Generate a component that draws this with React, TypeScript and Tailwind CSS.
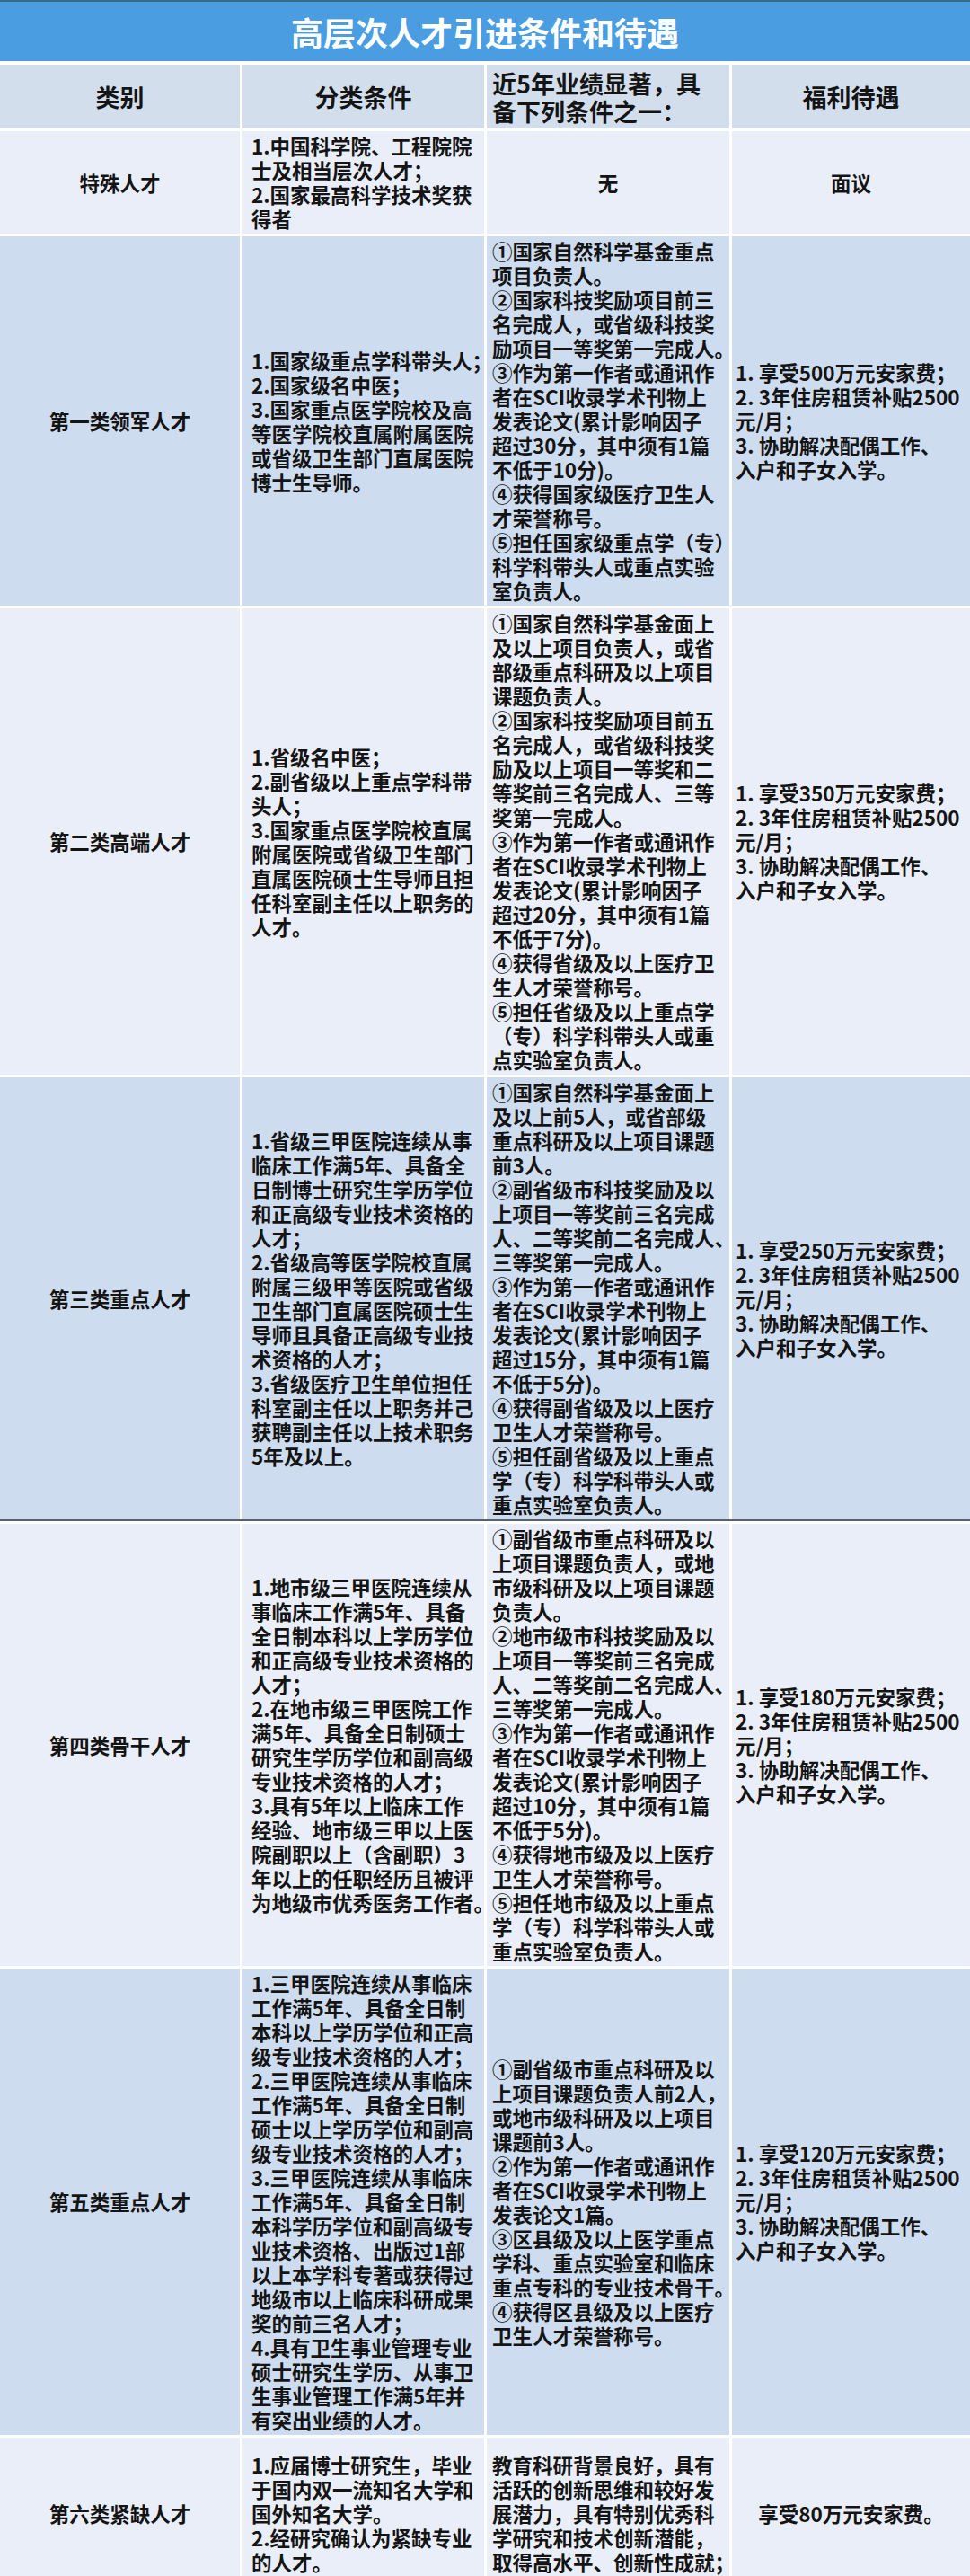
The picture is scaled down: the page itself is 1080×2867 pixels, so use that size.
import React from "react";

type Row = {
  name: string;
  c2: string[];
  c3: string[];
  c4: string[];
  dark: boolean;
  c3center?: boolean;
  c4center?: boolean;
  seam?: boolean;
  minH?: string;
};

const benefit = (amt: string) => [
  `1. 享受${amt}万元安家费；`,
  "2. 3年住房租赁补贴2500",
  "元/月；",
  "3. 协助解决配偶工作、",
  "入户和子女入学。",
];

const rows: Row[] = [
  {
    name: "特殊人才",
    c2: ["1.中国科学院、工程院院", "士及相当层次人才；", "2.国家最高科学技术奖获", "得者"],
    c3: ["无"],
    c4: ["面议"],
    dark: false,
    c3center: true,
    c4center: true,
  },
  {
    name: "第一类领军人才",
    c2: [
      "1.国家级重点学科带头人；",
      "2.国家级名中医；",
      "3.国家重点医学院校及高",
      "等医学院校直属附属医院",
      "或省级卫生部门直属医院",
      "博士生导师。",
    ],
    c3: [
      "①国家自然科学基金重点",
      "项目负责人。",
      "②国家科技奖励项目前三",
      "名完成人，或省级科技奖",
      "励项目一等奖第一完成人。",
      "③作为第一作者或通讯作",
      "者在SCI收录学术刊物上",
      "发表论文(累计影响因子",
      "超过30分，其中须有1篇",
      "不低于10分)。",
      "④获得国家级医疗卫生人",
      "才荣誉称号。",
      "⑤担任国家级重点学（专）",
      "科学科带头人或重点实验",
      "室负责人。",
    ],
    c4: benefit("500"),
    dark: true,
  },
  {
    name: "第二类高端人才",
    c2: [
      "1.省级名中医；",
      "2.副省级以上重点学科带",
      "头人；",
      "3.国家重点医学院校直属",
      "附属医院或省级卫生部门",
      "直属医院硕士生导师且担",
      "任科室副主任以上职务的",
      "人才。",
    ],
    c3: [
      "①国家自然科学基金面上",
      "及以上项目负责人，或省",
      "部级重点科研及以上项目",
      "课题负责人。",
      "②国家科技奖励项目前五",
      "名完成人，或省级科技奖",
      "励及以上项目一等奖和二",
      "等奖前三名完成人、三等",
      "奖第一完成人。",
      "③作为第一作者或通讯作",
      "者在SCI收录学术刊物上",
      "发表论文(累计影响因子",
      "超过20分，其中须有1篇",
      "不低于7分)。",
      "④获得省级及以上医疗卫",
      "生人才荣誉称号。",
      "⑤担任省级及以上重点学",
      "（专）科学科带头人或重",
      "点实验室负责人。",
    ],
    c4: benefit("350"),
    dark: false,
  },
  {
    name: "第三类重点人才",
    c2: [
      "1.省级三甲医院连续从事",
      "临床工作满5年、具备全",
      "日制博士研究生学历学位",
      "和正高级专业技术资格的",
      "人才；",
      "2.省级高等医学院校直属",
      "附属三级甲等医院或省级",
      "卫生部门直属医院硕士生",
      "导师且具备正高级专业技",
      "术资格的人才；",
      "3.省级医疗卫生单位担任",
      "科室副主任以上职务并己",
      "获聘副主任以上技术职务",
      "5年及以上。",
    ],
    c3: [
      "①国家自然科学基金面上",
      "及以上前5人，或省部级",
      "重点科研及以上项目课题",
      "前3人。",
      "②副省级市科技奖励及以",
      "上项目一等奖前三名完成",
      "人、二等奖前二名完成人、",
      "三等奖第一完成人。",
      "③作为第一作者或通讯作",
      "者在SCI收录学术刊物上",
      "发表论文(累计影响因子",
      "超过15分，其中须有1篇",
      "不低于5分)。",
      "④获得副省级及以上医疗",
      "卫生人才荣誉称号。",
      "⑤担任副省级及以上重点",
      "学（专）科学科带头人或",
      "重点实验室负责人。",
    ],
    c4: benefit("250"),
    dark: true,
    seam: true,
  },
  {
    name: "第四类骨干人才",
    c2: [
      "1.地市级三甲医院连续从",
      "事临床工作满5年、具备",
      "全日制本科以上学历学位",
      "和正高级专业技术资格的",
      "人才；",
      "2.在地市级三甲医院工作",
      "满5年、具备全日制硕士",
      "研究生学历学位和副高级",
      "专业技术资格的人才；",
      "3.具有5年以上临床工作",
      "经验、地市级三甲以上医",
      "院副职以上（含副职）3",
      "年以上的任职经历且被评",
      "为地级市优秀医务工作者。",
    ],
    c3: [
      "①副省级市重点科研及以",
      "上项目课题负责人，或地",
      "市级科研及以上项目课题",
      "负责人。",
      "②地市级市科技奖励及以",
      "上项目一等奖前三名完成",
      "人、二等奖前二名完成人、",
      "三等奖第一完成人。",
      "③作为第一作者或通讯作",
      "者在SCI收录学术刊物上",
      "发表论文(累计影响因子",
      "超过10分，其中须有1篇",
      "不低于5分)。",
      "④获得地市级及以上医疗",
      "卫生人才荣誉称号。",
      "⑤担任地市级及以上重点",
      "学（专）科学科带头人或",
      "重点实验室负责人。",
    ],
    c4: benefit("180"),
    dark: false,
  },
  {
    name: "第五类重点人才",
    c2: [
      "1.三甲医院连续从事临床",
      "工作满5年、具备全日制",
      "本科以上学历学位和正高",
      "级专业技术资格的人才；",
      "2.三甲医院连续从事临床",
      "工作满5年、具备全日制",
      "硕士以上学历学位和副高",
      "级专业技术资格的人才；",
      "3.三甲医院连续从事临床",
      "工作满5年、具备全日制",
      "本科学历学位和副高级专",
      "业技术资格、出版过1部",
      "以上本学科专著或获得过",
      "地级市以上临床科研成果",
      "奖的前三名人才；",
      "4.具有卫生事业管理专业",
      "硕士研究生学历、从事卫",
      "生事业管理工作满5年并",
      "有突出业绩的人才。",
    ],
    c3: [
      "①副省级市重点科研及以",
      "上项目课题负责人前2人，",
      "或地市级科研及以上项目",
      "课题前3人。",
      "②作为第一作者或通讯作",
      "者在SCI收录学术刊物上",
      "发表论文1篇。",
      "③区县级及以上医学重点",
      "学科、重点实验室和临床",
      "重点专科的专业技术骨干。",
      "④获得区县级及以上医疗",
      "卫生人才荣誉称号。",
    ],
    c4: benefit("120"),
    dark: true,
  },
  {
    name: "第六类紧缺人才",
    c2: [
      "1.应届博士研究生，毕业",
      "于国内双一流知名大学和",
      "国外知名大学。",
      "2.经研究确认为紧缺专业",
      "的人才。",
    ],
    c3: [
      "教育科研背景良好，具有",
      "活跃的创新思维和较好发",
      "展潜力，具有特别优秀科",
      "学研究和技术创新潜能，",
      "取得高水平、创新性成就；",
    ],
    c4: ["享受80万元安家费。"],
    dark: false,
    c4center: true,
    minH: "min-h-[168px]",
  },
];

function Lines({ lines }: { lines: string[] }) {
  return (
    <div>
      {lines.map((l, i) => (
        <div key={i} className="whitespace-nowrap">
          {l}
        </div>
      ))}
    </div>
  );
}

export default function App() {
  return (
    <div
      className="w-[1080px] h-[2867px] overflow-hidden bg-white text-[#141414]"
      style={{ fontFamily: '"Noto Sans CJK SC", "Noto Sans", sans-serif' }}
    >
      <div className="h-[68px] border-t-2 border-[#3a6b84] bg-[#4a9de0] flex items-center justify-center">
        <h1 className="text-[36px] leading-[40px] font-bold text-white">高层次人才引进条件和待遇</h1>
      </div>
      <div className="flex flex-col gap-[3px] pt-[4px]">
        <div className="grid grid-cols-[267px_269px_270px_1fr] gap-[3px] h-[71px] text-[27px] leading-[31px] font-semibold">
          <div className="bg-[#d2deec] flex items-center justify-center">类别</div>
          <div className="bg-[#d2deec] flex items-center justify-center">分类条件</div>
          <div className="bg-[#d2deec] flex items-center pl-[6px]">
            <div>
              <div className="whitespace-nowrap">近5年业绩显著，具</div>
              <div className="whitespace-nowrap">备下列条件之一：</div>
            </div>
          </div>
          <div className="bg-[#d2deec] flex items-center justify-center">福利待遇</div>
        </div>
        {rows.map((r, i) => {
          const bg = r.dark ? "bg-[#cddcef]" : "bg-[#e9eef8]";
          return (
            <div
              key={i}
              className={`grid grid-cols-[267px_269px_270px_1fr] gap-[3px] text-[22.5px] leading-[27px] font-semibold ${r.seam ? "border-b-2 border-[#58626d]" : ""} ${r.minH ?? ""}`}
            >
              <div className={`${bg} flex items-center justify-center py-[3px]`}>{r.name}</div>
              <div className={`${bg} flex items-center pl-[10px] py-[3px]`}>
                <Lines lines={r.c2} />
              </div>
              <div className={`${bg} flex items-center py-[3px] ${r.c3center ? "justify-center" : "pl-[6px]"}`}>
                <Lines lines={r.c3} />
              </div>
              <div className={`${bg} flex items-center py-[3px] ${r.c4center ? "justify-center" : "pl-[4px]"}`}>
                <Lines lines={r.c4} />
              </div>
            </div>
          );
        })}
      </div>
    </div>
  );
}
